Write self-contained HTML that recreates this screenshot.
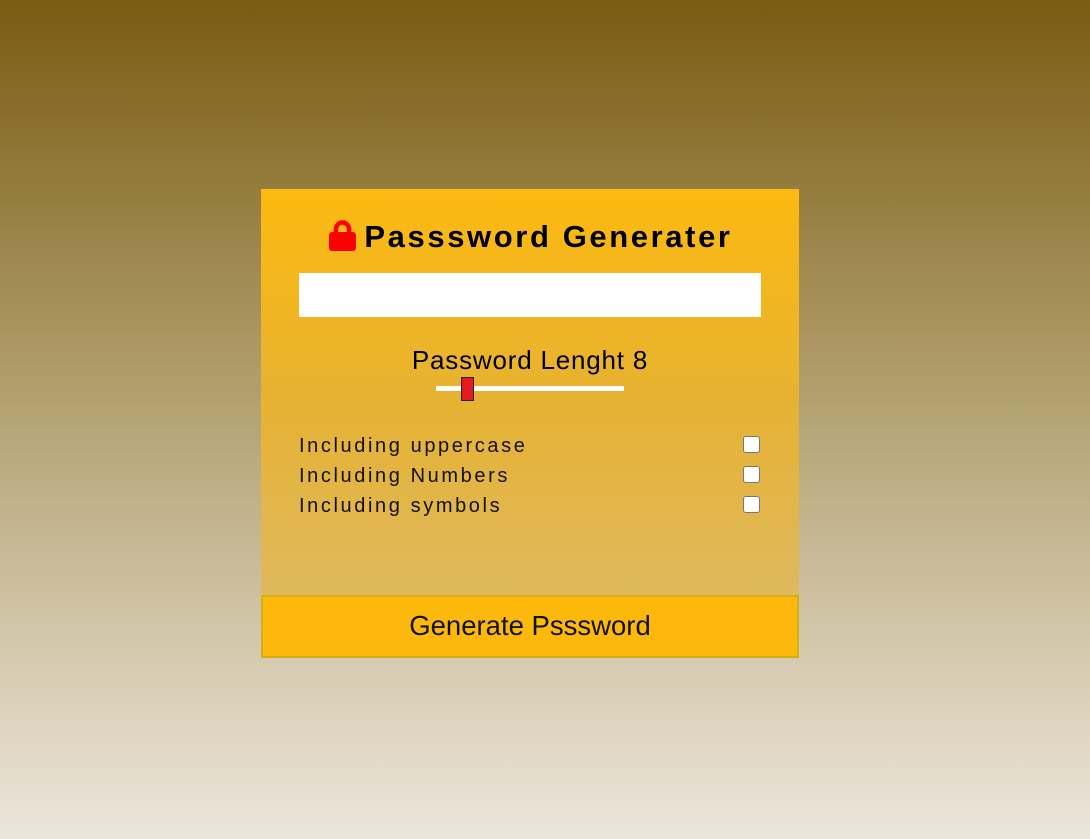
<!DOCTYPE html>
<html><head><meta charset="utf-8"><style>
*{margin:0;padding:0;box-sizing:border-box}
html,body{width:1090px;height:839px;overflow:hidden}
body{background:linear-gradient(to bottom,#7a5b12 0%,#a99660 40%,#d2c6a9 75%,#ece6dc 100%);font-family:"Liberation Sans",sans-serif;position:relative}
.card{position:absolute;left:261px;top:189px;width:538px;height:469px;background:linear-gradient(to bottom,#fdb90f 0%,#e6b232 45%,#dcbb6c 100%)}
.title{position:absolute;left:-28px;right:0;top:218px;text-align:center;font-weight:bold;font-size:31px;letter-spacing:2.6px;color:#000;line-height:38px;white-space:nowrap}
.title svg{vertical-align:-4px;margin-right:8px}
.inp{position:absolute;left:38px;top:84px;width:462px;height:44px;background:#fff}
.len{position:absolute;left:0;right:0;top:156px;text-align:center;font-size:26px;line-height:30px;color:#000;letter-spacing:0.8px}
.track{position:absolute;left:175px;top:197px;width:188px;height:5px;background:#fff}
.thumb{position:absolute;left:200px;top:188px;width:13px;height:24px;background:#e31b1b;border:1px solid #222}
.opt{position:absolute;left:38px;font-size:20px;letter-spacing:2.6px;color:#111;line-height:24px}
.cb{position:absolute;left:482px;width:17px;height:17px;background:#fff;border:1px solid #777;border-radius:3px}
.btn{position:absolute;left:0;top:406px;width:538px;height:63px;background:#fdb90b;border:2px solid #d4b016;text-align:center;font-size:27.5px;line-height:58px;color:#111}
</style></head><body>
<div class="card">
<div class="inp"></div>
<div class="len">Password Lenght 8</div>
<div class="track"></div><div class="thumb"></div>
<div class="opt" style="top:245px">Including uppercase</div><div class="cb" style="top:247px"></div>
<div class="opt" style="top:275px">Including Numbers</div><div class="cb" style="top:277px"></div>
<div class="opt" style="top:305px">Including symbols</div><div class="cb" style="top:307px"></div>
<div class="btn">Generate Psssword</div>
</div>
<div class="title"><svg width="27" height="31" viewBox="0 0 27 31"><path d="M7 14V9a6.5 6.5 0 0 1 13 0v5" fill="none" stroke="#f00" stroke-width="4.5"/><rect x="0" y="12" width="27" height="19" rx="3" fill="#f00"/></svg>Passsword Generater</div>
</body></html>
